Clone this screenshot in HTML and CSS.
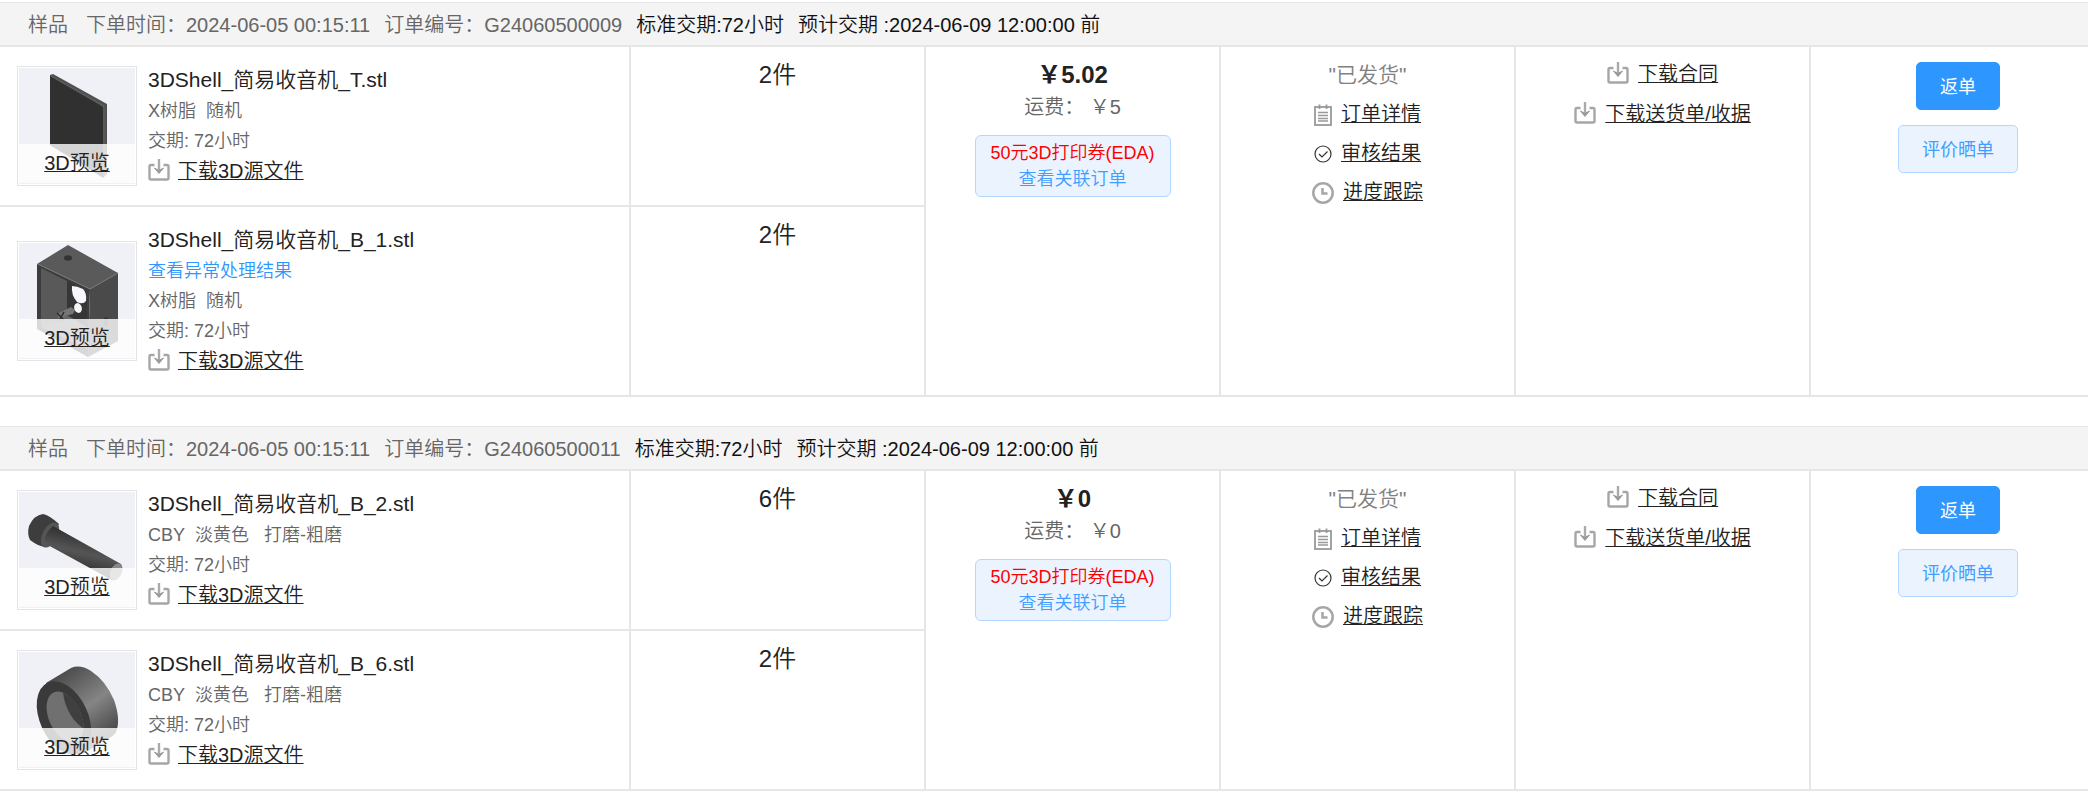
FILE: index.html
```html
<!DOCTYPE html>
<html lang="zh-CN">
<head>
  <meta charset="UTF-8">
  <title>我的订单</title>
  <link rel="stylesheet" href="styles.css">
</head>
<body>
  <!-- 公用图标 -->
  <svg class="icon-defs" width="0" height="0" aria-hidden="true">
    <symbol id="icon-download" viewBox="0 0 22 22">
      <path d="M6.5 6H3Q1.500 6 1.500 7.500V19Q1.500 20.500 3 20.500H19Q20.500 20.500 20.500 19V7.500Q20.500 6 19 6H15.500" fill="none" stroke="#a6a6a6" stroke-width="2.400"/>
      <path d="M11 0V12" stroke="#aaa" stroke-width="2.400"/>
      <path d="M6.500 9L11 14.500L15.500 9L11 11.500Z" fill="#999" stroke="#999"/>
    </symbol>
    <symbol id="icon-list" viewBox="0 0 18 22">
      <rect x="1" y="3" width="16" height="18" fill="none" stroke="#999" stroke-width="1.800"/>
      <path d="M5.500 0.500V5M12.500 0.500V5" stroke="#999" stroke-width="1.800"/>
      <path d="M4 8.500H14M4 11.500H14M4 14.500H14M4 17H14" stroke="#999" stroke-width="1.400"/>
    </symbol>
    <symbol id="icon-check" viewBox="0 0 18 18">
      <circle cx="9" cy="9" r="8" fill="none" stroke="#333" stroke-width="1.200"/>
      <path d="M5 9L8 12L13.500 6.500" fill="none" stroke="#333" stroke-width="1.200"/>
    </symbol>
    <symbol id="icon-clock" viewBox="0 0 22 22">
      <circle cx="11" cy="11" r="9.700" fill="none" stroke="#a6a6a6" stroke-width="2.500"/>
      <path d="M10.500 6V11.500H15.500" fill="none" stroke="#a6a6a6" stroke-width="2.500"/>
    </symbol>
  </svg>

  <section class="order">
    <div class="order-head">
      <span class="order-type">样品</span>
      <span>下单时间：2024-06-05 00:15:11</span>
      <span>订单编号：G24060500009</span>
      <span class="order-date">标准交期:72小时</span>
      <span class="order-date">预计交期 :2024-06-09 12:00:00 前</span>
    </div>
    <table class="order-table">
      <colgroup>
        <col class="col-file"><col class="col-item"><col class="col-item"><col class="col-item"><col class="col-item"><col>
      </colgroup>
      <tr>
        <td class="cell-file">
          <div class="file">
            <div class="thumb">
              <svg viewBox="0 0 116 116">
                <path d="M31 7L34 6L88 36V106L84 110L31 77Z" fill="#505050"/>
                <path d="M31 8L84 39V109L31 77Z" fill="#303030"/>
                <path d="M32 8L85 38V108" fill="none" stroke="#6b6b6b" stroke-width="0.700"/>
              </svg>
              <a class="preview" href="#">3D预览</a>
            </div>
            <div class="file-info">
              <div class="file-name">3DShell_简易收音机_T.stl</div>
              <div class="file-meta">X树脂&nbsp; 随机</div>
              <div class="file-meta">交期: 72小时</div>
              <div class="file-down"><svg class="icon icon-down"><use href="#icon-download"/></svg><a href="#">下载3D源文件</a></div>
            </div>
          </div>
        </td>
        <td class="cell-num">2件</td>
        <td class="cell-price" rowspan="2">
          <div class="price">￥5.02</div>
          <div class="freight">运费： ￥5</div>
          <div class="coupon">
            <span class="coupon-name">50元3D打印券(EDA)</span>
            <a class="coupon-link" href="#">查看关联订单</a>
          </div>
        </td>
        <td class="cell-links" rowspan="2">
          <div class="status">"已发货"</div>
          <div class="link-row"><svg class="icon icon-sm"><use href="#icon-list"/></svg><a href="#">订单详情</a></div>
          <div class="link-row"><svg class="icon icon-sm"><use href="#icon-check"/></svg><a href="#">审核结果</a></div>
          <div class="link-row"><svg class="icon"><use href="#icon-clock"/></svg><a href="#">进度跟踪</a></div>
        </td>
        <td class="cell-downs" rowspan="2">
          <div class="link-row down-row"><svg class="icon icon-down"><use href="#icon-download"/></svg><a href="#">下载合同</a></div>
          <div class="link-row down-row"><svg class="icon icon-down"><use href="#icon-download"/></svg><a href="#">下载送货单/收据</a></div>
        </td>
        <td class="cell-btns" rowspan="2">
          <button class="btn btn-primary" type="button">返单</button>
          <button class="btn btn-plain" type="button">评价晒单</button>
        </td>
      </tr>
      <tr>
        <td class="cell-file">
          <div class="file">
            <div class="thumb">
              <svg viewBox="0 0 116 116">
                <path d="M49 2L99 30L71 46L18 21Z" fill="#5a5a5a"/>
                <path d="M18 21L71 46L69 114L18 86Z" fill="#3c3c3c"/>
                <path d="M71 46L99 30V98L69 114Z" fill="#4a4a4a"/>
                <path d="M22 25L48 38V72L22 84Z" fill="#595959"/>
                <path d="M48 38L68 48V92L48 78Z" fill="#363636"/>
                <path d="M22 84L48 72L68 84V106Z" fill="#666"/>
                <path d="M38 71L52 64L56 67L54 71L46 73L41 78Z" fill="#757575"/>
                <path d="M38 70L45 77M45 69L40 78" stroke="#2b2b2b" stroke-width="1.500"/>
                <path d="M53 43Q58 43 64 46Q68 50 67 58Q64 62 58 59Q52 52 53 43Z" fill="#f6f7fb"/>
                <ellipse cx="59" cy="65" rx="3.800" ry="5" fill="#f6f7fb" transform="rotate(-15 59 65)"/>
                <ellipse cx="49" cy="15" rx="4" ry="2.700" fill="#333"/>
                <ellipse cx="87" cy="79" rx="2.200" ry="5" fill="#333"/>
                <path d="M19 21L71 46L99 30" fill="none" stroke="#777"/>
              </svg>
              <a class="preview" href="#">3D预览</a>
            </div>
            <div class="file-info">
              <div class="file-name">3DShell_简易收音机_B_1.stl</div>
              <div class="file-meta"><a class="file-result" href="#">查看异常处理结果</a></div>
              <div class="file-meta">X树脂&nbsp; 随机</div>
              <div class="file-meta">交期: 72小时</div>
              <div class="file-down"><svg class="icon icon-down"><use href="#icon-download"/></svg><a href="#">下载3D源文件</a></div>
            </div>
          </div>
        </td>
        <td class="cell-num">2件</td>
      </tr>
    </table>
  </section>

  <section class="order">
    <div class="order-head">
      <span class="order-type">样品</span>
      <span>下单时间：2024-06-05 00:15:11</span>
      <span>订单编号：G24060500011</span>
      <span class="order-date">标准交期:72小时</span>
      <span class="order-date">预计交期 :2024-06-09 12:00:00 前</span>
    </div>
    <table class="order-table">
      <colgroup>
        <col class="col-file"><col class="col-item"><col class="col-item"><col class="col-item"><col class="col-item"><col>
      </colgroup>
      <tr>
        <td class="cell-file">
          <div class="file">
            <div class="thumb">
              <svg viewBox="0 0 116 116">
                <defs>
                  <linearGradient id="bolt" x1="0.600" y1="0.200" x2="0.400" y2="0.800">
                    <stop offset="0" stop-color="#333"/>
                    <stop offset="0.500" stop-color="#555"/>
                    <stop offset="1" stop-color="#333"/>
                  </linearGradient>
                </defs>
                <path d="M24 22Q30 23 40 32L27 55Q20 55 11 48Q8 42 10 34Q15 23 24 22Z" fill="#3d3d3d"/>
                <ellipse cx="31" cy="43" rx="7.500" ry="13.500" fill="#555" transform="rotate(28 31 43)"/>
                <path d="M34 34L102 72Q105 77 101 84Q96 90 91 87L27 52Q23 44 34 34Z" fill="url(#bolt)"/>
                <ellipse cx="97" cy="80" rx="5.500" ry="9" fill="#888" transform="rotate(25 97 80)"/>
              </svg>
              <a class="preview" href="#">3D预览</a>
            </div>
            <div class="file-info">
              <div class="file-name">3DShell_简易收音机_B_2.stl</div>
              <div class="file-meta">CBY&nbsp; 淡黄色 &nbsp; 打磨-粗磨</div>
              <div class="file-meta">交期: 72小时</div>
              <div class="file-down"><svg class="icon icon-down"><use href="#icon-download"/></svg><a href="#">下载3D源文件</a></div>
            </div>
          </div>
        </td>
        <td class="cell-num">6件</td>
        <td class="cell-price" rowspan="2">
          <div class="price">￥0</div>
          <div class="freight">运费： ￥0</div>
          <div class="coupon">
            <span class="coupon-name">50元3D打印券(EDA)</span>
            <a class="coupon-link" href="#">查看关联订单</a>
          </div>
        </td>
        <td class="cell-links" rowspan="2">
          <div class="status">"已发货"</div>
          <div class="link-row"><svg class="icon icon-sm"><use href="#icon-list"/></svg><a href="#">订单详情</a></div>
          <div class="link-row"><svg class="icon icon-sm"><use href="#icon-check"/></svg><a href="#">审核结果</a></div>
          <div class="link-row"><svg class="icon"><use href="#icon-clock"/></svg><a href="#">进度跟踪</a></div>
        </td>
        <td class="cell-downs" rowspan="2">
          <div class="link-row down-row"><svg class="icon icon-down"><use href="#icon-download"/></svg><a href="#">下载合同</a></div>
          <div class="link-row down-row"><svg class="icon icon-down"><use href="#icon-download"/></svg><a href="#">下载送货单/收据</a></div>
        </td>
        <td class="cell-btns" rowspan="2">
          <button class="btn btn-primary" type="button">返单</button>
          <button class="btn btn-plain" type="button">评价晒单</button>
        </td>
      </tr>
      <tr>
        <td class="cell-file">
          <div class="file">
            <div class="thumb">
              <svg viewBox="0 0 116 116">
                <defs>
                  <linearGradient id="ring" x1="0.200" y1="0" x2="0.800" y2="1">
                    <stop offset="0" stop-color="#444"/>
                    <stop offset="0.500" stop-color="#858585"/>
                    <stop offset="0.900" stop-color="#444"/>
                  </linearGradient>
                  <clipPath id="ring-hole">
                    <ellipse cx="46" cy="65" rx="16" ry="27" transform="rotate(-25 46 65)"/>
                  </clipPath>
                </defs>
                <path d="M27 31L52 16Q61 12 72 19Q87 29 95 48Q102 68 97 80Q95 84 88 87L64 102Z" fill="url(#ring)"/>
                <ellipse cx="45" cy="66" rx="24" ry="39" fill="#3a3a3a" transform="rotate(-25 45 66)"/>
                <g clip-path="url(#ring-hole)">
                  <path d="M20 30H80V100H20Z" fill="#707070"/>
                  <ellipse cx="65" cy="50" rx="18" ry="31" fill="#3f3f3f" transform="rotate(-25 65 50)"/>
                </g>
              </svg>
              <a class="preview" href="#">3D预览</a>
            </div>
            <div class="file-info">
              <div class="file-name">3DShell_简易收音机_B_6.stl</div>
              <div class="file-meta">CBY&nbsp; 淡黄色 &nbsp; 打磨-粗磨</div>
              <div class="file-meta">交期: 72小时</div>
              <div class="file-down"><svg class="icon icon-down"><use href="#icon-download"/></svg><a href="#">下载3D源文件</a></div>
            </div>
          </div>
        </td>
        <td class="cell-num">2件</td>
      </tr>
    </table>
  </section>
</body>
</html>
```
FILE: styles.css
```css
body {
  margin: 0;
  padding-top: 2px;
  background-color: #fff;
  color: #222;
  font-family: "Liberation Sans", Arial, "Noto Sans CJK SC", sans-serif;
  font-size: 20px;
  font-weight: 350;
}

a {
  color: #222;
  text-decoration: underline;
  text-underline-offset: 1px;
  text-decoration-thickness: 1px;
}

.icon-defs {
  position: absolute;
}

.order {
  margin-bottom: 29px;
}

.order-head {
  display: flex;
  align-items: center;
  gap: 14px;
  height: 40px;
  padding: 0 28px 2px;
  background-color: #f4f4f4;
  border-top: 1px solid #e6e6e6;
  border-bottom: 2px solid #e6e6e6;
  color: #666;
  white-space: nowrap;
}

.order-type {
  margin-right: 4px;
}

.order-date {
  color: #111;
}

.order-table {
  width: 100%;
  table-layout: fixed;
  border-collapse: separate;
  border-spacing: 0;
}

.col-file {
  width: 30.22%;
}

.col-item {
  width: 14.13%;
}

td {
  padding: 0;
  vertical-align: top;
  text-align: center;
  border-right: 2px solid #e6e6e6;
  border-bottom: 2px solid #e6e6e6;
}

/* 文件列 */
.file {
  display: flex;
  align-items: center;
  gap: 11px;
  padding-left: 17px;
  text-align: left;
}

.thumb {
  position: relative;
  flex: none;
  box-sizing: border-box;
  width: 120px;
  height: 120px;
  padding: 1px;
  border: 1px solid #e2e4e6;
}

.thumb svg {
  display: block;
  width: 100%;
  height: 100%;
  background-color: #f0f1f6;
}

.preview {
  position: absolute;
  left: 1px;
  right: 1px;
  bottom: 2px;
  height: 39px;
  line-height: 39px;
  text-align: center;
  background-color: rgba(255, 255, 255, 0.8);
}

.file-info {
  padding: 16px 0 19px;
}

.file-name {
  font-size: 21px;
  line-height: 33px;
}

.file-meta {
  color: #666;
  font-size: 18px;
  line-height: 30px;
}

.file-result {
  color: #2e96ff;
  text-decoration: none;
}

.file-down {
  display: flex;
  align-items: center;
  gap: 8px;
  line-height: 30px;
}

.icon {
  flex: none;
  width: 22px;
  height: 22px;
}

.icon-sm {
  width: 18px;
}

.icon-down {
  margin-bottom: 3px;
}

/* 数量、价格 */
.cell-num {
  padding-top: 12px;
  font-size: 24px;
  line-height: 32px;
}

.cell-price {
  padding-top: 12px;
}

.price {
  font-size: 24px;
  font-weight: bold;
  line-height: 32px;
}

.freight {
  color: #666;
  line-height: 32px;
}

.coupon {
  display: inline-flex;
  flex-direction: column;
  margin-top: 12px;
  padding: 4px 15px;
  border: 1px solid #b3d8ff;
  border-radius: 6px;
  background-color: #ebf3ff;
  font-size: 18px;
  line-height: 26px;
}

.coupon-name {
  color: #f00;
}

.coupon-link {
  color: #409eff;
  text-decoration: none;
}

/* 状态、下载 */
.cell-links {
  padding-top: 8px;
}

.cell-downs {
  padding-top: 7px;
}

.status {
  color: #808080;
  font-size: 21px;
  line-height: 40px;
}

.link-row {
  display: flex;
  align-items: center;
  justify-content: center;
  gap: 9px;
  line-height: 39px;
}

.down-row {
  line-height: 40px;
}

/* 操作按钮 */
.cell-btns {
  padding: 15px 0 0 17px;
  border-right: none;
}

.btn {
  display: block;
  height: 48px;
  margin: 0 auto 15px;
  padding: 0 23px 2px;
  border: 1px solid #2e96ff;
  border-radius: 5px;
  font-family: inherit;
  font-size: 18px;
  cursor: pointer;
}

.btn-primary {
  background-color: #2e96ff;
  color: #fff;
}

.btn-plain {
  background-color: #ebf3ff;
  border-color: #b3d8ff;
  color: #409eff;
}
```
